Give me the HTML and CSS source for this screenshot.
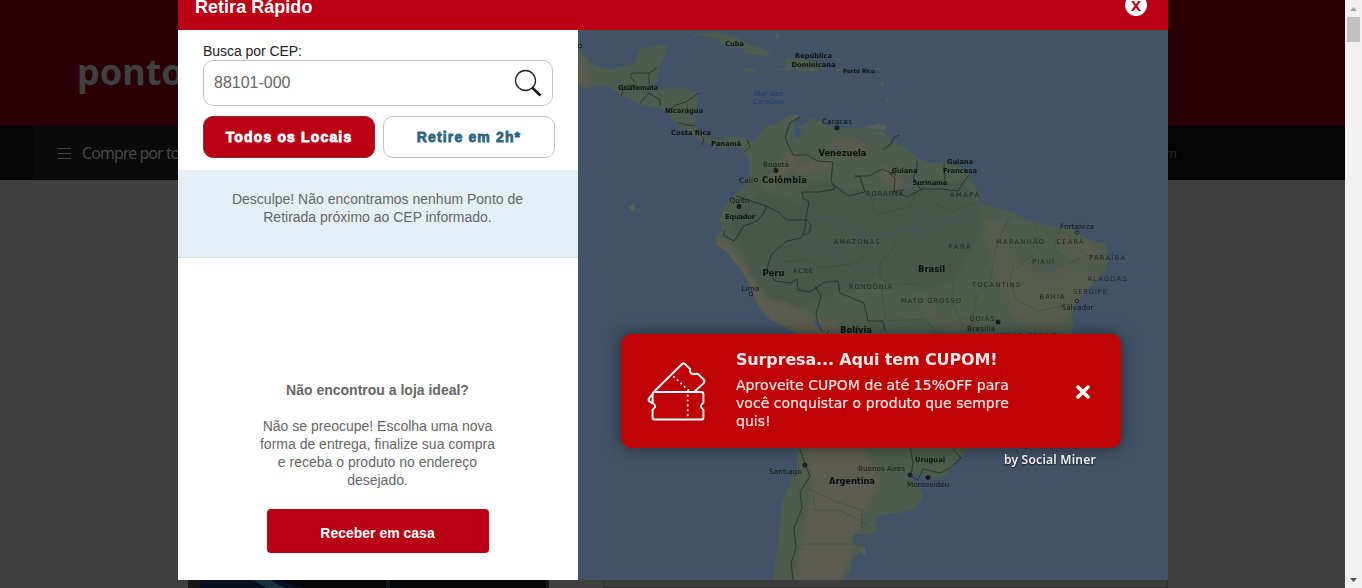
FILE: index.html
```html
<!DOCTYPE html>
<html lang="pt-BR">
<head>
<meta charset="utf-8">
<title>Retira Rápido</title>
<link rel="stylesheet" href="styles.css">
</head>
<body>
<div class="screen">
  <div class="page">
    <header class="brand-bar"><span class="brand">ponto</span></header>
    <nav class="nav">
      <div class="nav-inner">
        <svg class="burger" viewBox="0 0 13 12"><path d="M0 1.500h13M0 6.500h13M0 11.500h13"/></svg>
        <span class="nav-label">Compre por to</span>
        <span class="nav-end">m</span>
      </div>
    </nav>
    <main class="content">
      <div class="product"><svg viewBox="0 0 361 8"><path class="tv-edge" d="M0 0h361v8H0z"/><path class="tv-blue" d="M12 0h186v8H12z"/><path class="tv-glow" d="M65 0h18q4 4 16 8H78z"/><path class="tv-dark" d="M90 0h108v8h-82zM202 0h156v8H202z"/></svg></div>
      <div class="card"></div>
    </main>
  </div>
  <div class="scrollbar">
    <svg viewBox="0 0 7 4"><path class="arrow-up" d="M3.500 0L7 4H0z"/></svg>
    <div class="thumb"></div>
    <svg class="down" viewBox="0 0 7 4"><path class="arrow-down" d="M0 0h7L3.500 4z"/></svg>
  </div>

  <section class="modal">
    <header class="modal-head">
      <h1>Retira Rápido</h1>
      <button class="modal-close">X</button>
    </header>
    <div class="modal-body">
      <aside class="panel">
        <div class="search">
          <label>Busca por CEP:</label>
          <div class="field"><span>88101-000</span>
            <svg viewBox="0 0 28 28"><circle cx="11.500" cy="11.500" r="10" /><path d="M18.500 19l8 7.500"/></svg>
          </div>
          <div class="tabs"><button class="tab active">Todos os Locais</button><button class="tab">Retire em 2h*</button></div>
        </div>
        <p class="notice">Desculpe! Não encontramos nenhum Ponto de<br>Retirada próximo ao CEP informado.</p>
        <div class="alternative">
          <strong>Não encontrou a loja ideal?</strong>
          <p>Não se preocupe! Escolha uma nova<br>forma de entrega, finalize sua compra<br>e receba o produto no endereço<br>desejado.</p>
          <button class="home">Receber em casa</button>
        </div>
      </aside>
      <svg class="map" viewBox="578 30 590 550">
        <defs>
          <filter id="soft" x="-20%" y="-20%" width="140%" height="140%"><feGaussianBlur stdDeviation="2"/></filter>
          <clipPath id="land-clip"><path id="land" d="M578 48L585 57 593 65 608 70 628 65 636 62 638 50 650 46 667 45 666 53 660 65 656 80 653 89 671 88 685 88 699 93 696 110 695 125 703 135 711 140 725 138 738 136 748 139 752 142 755 140 761 132 765 127 775 124 783 119 793 114 801 116 793 122 795 127 805 124 811 118 820 121 828 127 841 128 861 128 871 127 883 132 889 137 890 142 905 147 918 158 930 163 946 162 961 167 968 173 973 185 981 195 978 203 993 207 1015 213 1026 220 1035 222 1055 227 1070 227 1085 237 1095 242 1105 243 1109 260 1106 270 1098 278 1085 292 1075 305 1072 317 1074 325 1070 345 1050 390 1010 405 990 430 970 448 960 457 952 468 942 478 928 478 915 473 910 477 923 492 922 498 915 509 900 513 880 515 875 520 877 532 867 535 853 533 853 542 865 547 860 553 852 560 850 572 843 580H773L777 550 780 527 782 502 790 483 797 467 797 448 803 400 802 340 791 330 771 320 758 307 751 287 741 270 728 253 716 245 716 237 723 230 720 220 723 208 730 200 736 193 746 183 750 170 748 157 744 153 738 147 729 147 725 151 711 145 701 140 691 134 681 127 671 117 660 108 638 104 621 95 610 87 598 85 588 89 578 86z"/></clipPath>
        </defs>
        <path class="sea" d="M578 30h590v550H578z"/>
        <path class="top-line" d="M578 30.500h590"/>
        <g class="green">
          <use href="#land"/>
          <path d="M688 39l8-5 22-2 17 4 12 8 14 4 12 6-8 2-20-2-2-5-19-4-7-6-17-4zM741 70l10-2 7 3-6 2zM774 69h12l-1-10 15-1 18 5 7 4-5 3-18 2-6-2-10 1zM835 69l10-1 4 2-6 2-8-1z"/>
        </g>
        <g clip-path="url(#land-clip)">
          <g filter="url(#soft)">
            <path class="deep" d="M728 225L760 190 800 202 812 180 850 190 905 190 965 180 978 205 985 215 970 255 950 285 915 290 880 278 850 290 815 300 780 315 755 280z"/>
            <path class="sand" d="M765 192L776 165 791 150 800 159 782 178zM792 170l14-8 25-1-1 7-25 6zM828 142l28-3 15 8-10 6-24-5zM883 165l12 7 10 12-10 7-14-11z"/>
            <path class="sand" d="M712 238l12 2 22 25 17 32 25 6 20 13 25 4 16 18-12 14-38-10-22-14-25-30-17-33-19-19zM797 440h62l22 40-17 32-22 68h-47l11-62 8-38z"/>
            <path class="scrub" d="M985 220l18 2 5 22 30 28 38-6 28 7-13 18-22 23-12 23-38-11-16-28-13-35zM1055 235l38 7 12 20-23 3-23-15zM920 305l25-10 18 15 17 16-40 5z"/>
            <path class="moss" d="M930 290l42-18 28 21-12 35-48-10zM1015 220l30 8 8 25-30 9-18-19zM893 450h60l-11 25h-37l-9-11zM783 493l13-8 8 25-12 37-8 33h-11l5-54zM880 484h35l-4 21-19 2z"/>
            <path class="sand" d="M578 53l10 18 1 14-11-3zM793 114l9 1-10 9z"/>
          </g>
          <path class="rivers" d="M801 222q24-11 50 5t52 2q24 6 34-8l16-1q18 0 28-16M800 250q28-6 43 10t28 5M912 229l12-20M984 233l-3-8M1045 278l15-5M920 170q-9 8-13 22M855 145l11-7 8 4M799 115l-2 12 4 8 4-4zM813 320l8 6M1048 270l10-4M945 222l12-2M912 183l13 6"/>
          <path class="states" d="M899 237q-9 17-19 25v17l11 5h28M870 195l5 20 35-8 5-12M935 203l17 8 24-8M1010 216l-13 28-8 40-12 12-8 40M1060 228l-6 21 17 14 17-8 18 5M1014 263l-4 15 6 22 23 11 33-7M1036 222l2 28-22 19M881 289l5 32 38-2 15 15M782 262l21-2 19 8 31-4 15-10M814 495v15h25l27 14M802 544h60v-34l-25-8-30-14M953 276v28l10 22"/>
        </g>
        <path class="borders" d="M632 73h18l7-6M649 73v11l3 4M632 73l-2 4 6 6M621 96l4-10 12-1M640 103l9-10 11 7v6M666 113l10-8 10-3 13-9M678 123l10 2 7 1M701 135l3 4-2 6M744 152l6-5-2-6-2-1M800 117l-10 6-5 15 8 17h15l9 6 16 1-2 19 4 8-15 3h-18l1 6 6 4-3 16-1 10-4 10-14 3-16 14-4 14 8 12 16 2 6-4 1 11 12 2 15-10 13-1 2 12 24 10 4 18h15l2 10M736 196l18 6 12 4-2 7-7 8-13 5-10 15-11-6 2-5M766 206l14 7 6 7h21l4 5-2 8-6 2M815 286l6 10-5 18 3 13 4 5M833 184l15 12 17-4-5-15-5-1h14l13-7 14 6M900 135l-6 2-3 7-8 6M898 167l-8 7 5 4-1 13 13 6 15-8h19l17 2 5-8 6-8M917 161v8l-4 9 9 13M944 164l1 18M890 192l14-2M797 440l8 24 5 12-10 16 2 16-8 20 2 20-5 15 2 17M858 448l-6-3M910 448l3 14-2 14 7 4 5-11 17 4 10-5 11-10-8-9M829 330l-4 7"/>
        <g class="islands"><path d="M628 207l5-3 3 5-4 3zM637 210l3-1-1 3zM645 211h2v1zM880 84l4-2-1 5zM884 91l2 1-1 2zM886 98l3 1-1 3zM884 107l2-1zM898 108h2v1zM776 34l4 2-4 3zM783 48l2-2zM793 42h3zM862 127l22 3 3-4-8-2zM865 556l-5-7 5-2z"/></g>
        <path class="lake" d="M796 126l4 3 1 8-5 1-3-5zM812 320l8 4 2 5-4-1z"/>
        <g class="dots"><circle cx="837" cy="128" r="2.500"/><circle cx="776" cy="170.500" r="2.500"/><circle cx="739" cy="206.500" r="2.500"/><circle cx="998" cy="322" r="2.500"/><circle cx="805" cy="465" r="2.500"/><circle cx="910" cy="475" r="2.500"/><circle cx="928" cy="477.500" r="2.500"/></g>
        <g class="rings"><circle cx="580" cy="46" r="1.700"/><circle cx="756" cy="180" r="1.700"/><circle cx="751" cy="294" r="1.700"/><circle cx="1077" cy="232.500" r="1.700"/><circle cx="1077" cy="301" r="1.700"/></g>
        <g class="country-small">
          <text x="725" y="45.500" textLength="19">Cuba</text><text x="795" y="58" textLength="37">República</text><text x="791.500" y="66.500" textLength="44">Dominicana</text><text x="843" y="72.500" textLength="32" class="tiny">Porto Rico</text>
          <text x="618" y="90" textLength="40">Guatemala</text><text x="665" y="112.500" textLength="38">Nicarágua</text><text x="671" y="134.500" textLength="40">Costa Rica</text><text x="711" y="145.500" textLength="30">Panamá</text>
          <text x="725" y="218.500" textLength="30">Equador</text><text x="891.500" y="173" textLength="26">Guiana</text><text x="912.500" y="184.500" textLength="35">Suriname</text><text x="947" y="164" textLength="26">Guiana</text><text x="943" y="172.500" textLength="34">Francesa</text><text x="915" y="462" textLength="30">Uruguai</text>
        </g>
        <g class="country">
          <text x="818.500" y="156" textLength="48">Venezuela</text><text x="762" y="183" textLength="45">Colômbia</text><text x="762.500" y="276" textLength="22">Peru</text><text x="918" y="271.500" textLength="27">Brasil</text><text x="840" y="332.500" textLength="32">Bolívia</text><text x="829" y="484" textLength="46">Argentina</text>
        </g>
        <g class="city">
          <text x="822" y="124" textLength="30">Caracas</text><text x="763" y="166.500" textLength="26">Bogotá</text><text x="739" y="182.500" textLength="14">Cali</text><text x="729.500" y="202.500" textLength="20">Quito</text><text x="741.500" y="290.500" textLength="18">Lima</text><text x="1060" y="229" textLength="34">Fortaleza</text><text x="1061.500" y="310" textLength="32">Salvador</text><text x="967" y="331" textLength="28">Brasília</text><text x="769" y="474" textLength="33">Santiago</text><text x="858" y="471" textLength="47">Buenos Aires</text><text x="907" y="486.500" textLength="42">Montevidéu</text>
        </g>
        <g class="state">
          <text x="866" y="196" textLength="37">RORAIMA</text><text x="950" y="196.500" textLength="29">AMAPÁ</text><text x="833.500" y="244" textLength="46">AMAZONAS</text><text x="948.500" y="248.500" textLength="22">PARÁ</text><text x="996" y="244" textLength="48">MARANHÃO</text><text x="1056.500" y="243.500" textLength="27">CEARÁ</text><text x="1032" y="264" textLength="22">PIAUÍ</text><text x="1089" y="260" textLength="36">PARAÍBA</text><text x="1087.500" y="281" textLength="39">ALAGOAS</text><text x="1073" y="293.500" textLength="34">SERGIPE</text><text x="1039.500" y="298.500" textLength="25">BAHIA</text><text x="972" y="287" textLength="48">TOCANTINS</text><text x="901" y="302.500" textLength="60">MATO GROSSO</text><text x="969.500" y="321" textLength="25">GOIÁS</text><text x="849" y="289" textLength="43">RONDÔNIA</text><text x="793" y="273" textLength="20">ACRE</text><text x="997" y="337.500" textLength="60">MINAS GERAIS</text>
        </g>
        <g class="sea-name"><text x="754" y="95.500" textLength="29">Mar das</text><text x="753" y="104" textLength="31">Caraíbas</text></g>
      </svg>
    </div>
  </section>

  <aside class="coupon">
    <div class="coupon-box">
      <svg class="tickets" viewBox="0 0 60 60"><path d="M7 29.500L33.500 3.500q2-2 4 0l4.500 4.500q-1 5 4 5 2-1 4 0l5 5q2 2 0 4l-8.500 8"/><path d="M5 33l-3 3q-2 2 0 4 2 0 3 2"/><path d="M7 30.500h46q2 0 2 2v8.500q-5 3.500 0 7v7.500q0 2-2 2H7q-2 0-2-2V48q5-3.500 0-7v-8.500q0-2 2-2z"/><path class="perf" d="M26 15.500l15 14M39.500 34v23"/></svg>
      <div class="coupon-copy"><h2>Surpresa... Aqui tem CUPOM!</h2><p>Aproveite CUPOM de até 15%OFF para<br>você conquistar o produto que sempre<br>quis!</p></div>
      <svg class="dismiss" viewBox="0 0 16 16"><path d="M3 3l10 10M13 3L3 13"/></svg>
    </div>
    <div class="credit">by Social Miner</div>
  </aside>
</div>
</body>
</html>
```
FILE: styles.css
```css
* { box-sizing: border-box; }
body { margin: 0; font-family: "Liberation Sans", Arial, sans-serif; }
h1, h2, p { margin: 0; }
button { border: 0; font-family: inherit; padding: 0; }
.screen { position: relative; width: 1362px; height: 588px; overflow: hidden; display: flex; }
.page { flex: 1; display: flex; flex-direction: column; background: #404040; }
.brand-bar { height: 126px; background: #290005; padding: 48px 0 0 77px; }
.brand { display: block; font: 700 36px/48px "Noto Sans", sans-serif; color: #404040; }
.nav { height: 54px; background: #050505; padding-left: 33px; border-bottom: 1px solid #000; }
.nav-inner { width: 1144px; height: 53px; display: flex; align-items: center; padding-left: 25px; background: linear-gradient(90deg, #0a0a0a 1000px, #050505 1000px); }
.burger { width: 13px; height: 12px; margin-right: 11px; }
.burger path { stroke: #454545; stroke-width: 1; }
.nav-label { font: 16px/20px "Noto Sans", sans-serif; color: #484848; letter-spacing: -.95px; }
.nav-end { margin-left: auto; font: 13px/20px "Open Sans", sans-serif; color: #292929; }
.content { flex: 1; display: flex; align-items: flex-end; padding-left: 188px; gap: 54px; }
.product { width: 361px; height: 8px; }
.product svg { display: block; width: 361px; height: 8px; }
.tv-edge { fill: #171717; }
.tv-blue { fill: #090e20; }
.tv-glow { fill: #173142; }
.tv-dark { fill: #050608; }
.card { width: 565px; height: 8px; background: #3d3c3c; border: solid #302e2e; border-width: 0 1px 1px; }
.scrollbar { width: 17px; background: #f0f0f0; display: flex; flex-direction: column; align-items: center; padding: 7px 0 6px; }
.scrollbar svg { width: 7px; height: 4px; }
.scrollbar .down { margin-top: auto; }
.arrow-up { fill: #a3a3a3; }
.arrow-down { fill: #505050; }
.thumb { width: 13px; height: 25px; margin-top: 6px; background: #c1c1c1; }

.modal { position: absolute; left: 178px; top: 0; width: 990px; height: 580px; display: flex; flex-direction: column; background: #fff; }
.modal-head { height: 30px; background: #b90014; color: #fff; display: flex; align-items: flex-start; justify-content: space-between; padding: 0 21px 0 17px; }
.modal-head h1 { margin-top: -3px; font-size: 18px; line-height: 20px; letter-spacing: .03px; }
.modal-close { width: 22px; height: 22px; margin-top: -6px; border-radius: 11px; background: #fff; color: #b90014; font: 700 15px/22px "Noto Sans", sans-serif; }
.modal-body { flex: 1; display: flex; }
.panel { width: 400px; display: flex; flex-direction: column; }
.search { height: 140px; padding: 13px 23px 0 25px; font-size: 14px; }
.search label { display: block; height: 17px; line-height: 17px; color: #222; letter-spacing: -.05px; }
.field { width: 350px; height: 46px; border: 1px solid #c3c3c3; border-radius: 10px; display: flex; align-items: center; justify-content: space-between; padding: 0 10px; color: #666; font: 16px/20px "Liberation Sans", sans-serif; }
.field svg { width: 28px; height: 28px; }
.field circle { fill: none; stroke: #222; stroke-width: 1.300; }
.field path { stroke: #111; stroke-width: 2.500; }
.tabs { display: flex; gap: 8px; margin-top: 10px; }
.tab { width: 172px; height: 42px; border: 1px solid #c3c3c3; border-radius: 10px; background: #fff; color: #2c6484; font: 700 14px/20px "Liberation Sans", Arial, sans-serif; letter-spacing: 1.15px; -webkit-text-stroke: .8px; }
.tab.active { border-color: #8c2a36; background: #b90014; color: #fff; }
.notice { height: 88px; background: #e3eff5; border-bottom: 1px dotted #c4cdd0; padding: 20px 1px 0 0; text-align: center; font-size: 14px; line-height: 18px; color: #666; }
.alternative { padding: 123px 0 0; display: flex; flex-direction: column; align-items: center; text-align: center; font-size: 14px; line-height: 18px; color: #666; }
.alternative strong, .alternative p { padding-right: 1px; }
.alternative p { margin-top: 18px; }
.home { width: 222px; height: 44px; margin-top: 20px; padding: 4px 1px 0 0; border-radius: 4px; background: #b90014; color: #fff; font-size: 14px; font-weight: 700; }

.map { width: 590px; height: 550px; display: block; font-family: "DejaVu Sans", Verdana, sans-serif; }
.sea { fill: #425267; }
.top-line { stroke: #505459; }
.green { fill: #4e5c4f; }
.deep { fill: #48564c; }
.sand { fill: #605c52; opacity: .8; }
.scrub { fill: #5b5b50; opacity: .6; }
.moss { fill: #4e5d4c; opacity: .8; }
.rivers, .states, .borders { fill: none; }
.rivers { stroke: #405571; stroke-width: .7; }
.states { stroke: #38413c; stroke-width: .5; stroke-dasharray: 3 1; }
.borders { stroke: #292f2c; stroke-width: .9; stroke-linejoin: round; }
.islands { fill: #57605b; }
.lake { fill: #3b5372; }
.dots { fill: #1c1e1e; }
.rings { fill: #555d59; stroke: #1e2222; }
.country-small { font-size: 6.800px; font-weight: 700; fill: #101313; }
.tiny { font-size: 5.800px; }
.country { font-size: 8.400px; font-weight: 700; fill: #0d0f0f; }
.city { font-size: 7.300px; fill: #131717; }
.state { font-size: 6.700px; fill: #202524; }
.sea-name { font-size: 7.200px; font-style: italic; fill: #233f6c; }

.coupon { position: absolute; left: 621px; top: 334px; width: 500px; }
.coupon-box { height: 114px; display: flex; border-radius: 10px; background: #bd0306; box-shadow: 0 0 15px rgba(0,0,0,.5); color: #f2e5e5; padding-left: 25px; }
.tickets { width: 62px; height: 61px; margin: 27px 27px 0 1px; fill: none; stroke: #fff; stroke-width: 1.900; stroke-linejoin: round; }
.perf { stroke-width: 2; stroke-dasharray: .1 4.700; stroke-linecap: round; }
.coupon-copy { width: 339px; padding-top: 16px; font-family: "DejaVu Sans", Verdana, sans-serif; }
.coupon h2 { font-size: 16px; line-height: 20px; white-space: nowrap; letter-spacing: -.15px; }
.coupon p { margin-top: 6px; font-size: 14px; line-height: 18px; white-space: nowrap; letter-spacing: .04px; -webkit-text-stroke: .2px; }
.dismiss { width: 16px; height: 16px; margin-top: 50px; stroke: #fff; stroke-width: 3.500; stroke-linecap: round; }
.credit { margin-top: 4px; padding-right: 25px; text-align: right; color: #f2f2f2; font: 600 12px/16px "Noto Sans", sans-serif; letter-spacing: .25px; text-shadow: 0 1px 2px #111; }
```
